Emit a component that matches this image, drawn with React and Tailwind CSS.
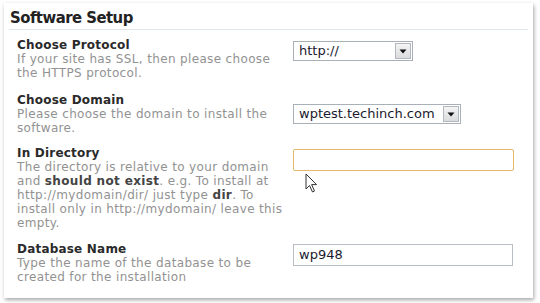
import React from "react";

const font = { fontFamily: '"DejaVu Sans", Verdana, sans-serif' };

function Arrow() {
  return (
    <svg width="8" height="5" viewBox="0 0 8 5">
      <path d="M0.5 0.5 H7.5 L4 4.5 Z" fill="#111" />
    </svg>
  );
}

function Select({ value, width }) {
  return (
    <div
      className="flex h-[20px] items-stretch border border-[#a9b0b8] bg-white"
      style={{ width }}
    >
      <div className="flex flex-1 items-center pl-[5px] text-[13px] text-[#1a1a2e]">{value}</div>
      <div className="m-px flex w-[16px] items-center justify-center border border-[#b4b9bf] bg-gradient-to-b from-[#f4f4f4] to-[#d9dbde]">
        <Arrow />
      </div>
    </div>
  );
}

function Label({ title, children }) {
  return (
    <div className="whitespace-nowrap text-[12px] leading-[14px]">
      <div className="font-bold tracking-[0.2px] text-[#2a2a2a]">{title}</div>
      <div className="tracking-[0.35px] text-[#929292]">{children}</div>
    </div>
  );
}

export default function App() {
  return (
    <div className="relative h-[303px] w-[540px] overflow-hidden bg-white" style={font}>
      <div className="absolute left-[4px] top-[3px] h-[295px] w-[529px] bg-white shadow-[1px_2px_4px_rgba(0,0,0,0.35)]">
        <div
          className="mx-[5px] border-b border-[#dfe7ee] pl-[1px] pt-[6px] pb-[2px] text-[16.5px] font-bold leading-[18px] tracking-[-0.5px] text-[#222]"
          style={{ fontFamily: '"DejaVu Sans Condensed", "DejaVu Sans", sans-serif' }}
        >
          Software Setup
        </div>
        <div className="pl-[13px] pt-[8px]">
          <div className="grid grid-cols-[276px_1fr]">
            <Label title="Choose Protocol">
              If your site has SSL, then please choose
              <br />
              the HTTPS protocol.
            </Label>
            <div className="pt-[3px]">
              <Select value="http://" width="120px" />
            </div>
          </div>
          <div className="mt-[13px] grid grid-cols-[276px_1fr]">
            <Label title="Choose Domain">
              Please choose the domain to install the
              <br />
              software.
            </Label>
            <div className="pt-[11px]">
              <Select value="wptest.techinch.com" width="168px" />
            </div>
          </div>
          <div className="mt-[11px] grid grid-cols-[276px_1fr]">
            <Label title="In Directory">
              The directory is relative to your domain
              <br />
              and <b className="text-[#444]">should not exist</b>. e.g. To install at
              <br />
              http://mydomain/dir/ just type <b className="text-[#444]">dir</b>. To
              <br />
              install only in http://mydomain/ leave this
              <br />
              empty.
            </Label>
            <div className="relative pt-[3px]">
              <div className="h-[22px] w-[221px] rounded-[2px] border-[1.5px] border-[#e6b86a] bg-white" />
              <svg className="absolute left-[12px] top-[27px]" width="14" height="21" viewBox="0 0 14 21">
                <path d="M1 1 L1 16 L4.5 12.5 L7.5 19 L9.5 18 L6.6 11.6 L11.5 11.6 Z" fill="#fff" stroke="#333" strokeWidth="1" strokeLinejoin="round" />
              </svg>
            </div>
          </div>
          <div className="mt-[12px] grid grid-cols-[276px_1fr]">
            <Label title="Database Name">
              Type the name of the database to be
              <br />
              created for the installation
            </Label>
            <div className="pt-[2px]">
              <div className="flex h-[22px] w-[220px] items-center border border-[#b9bec4] bg-white pl-[5px] text-[13px] text-[#1a1a2e]">
                wp948
              </div>
            </div>
          </div>
        </div>
      </div>
    </div>
  );
}
